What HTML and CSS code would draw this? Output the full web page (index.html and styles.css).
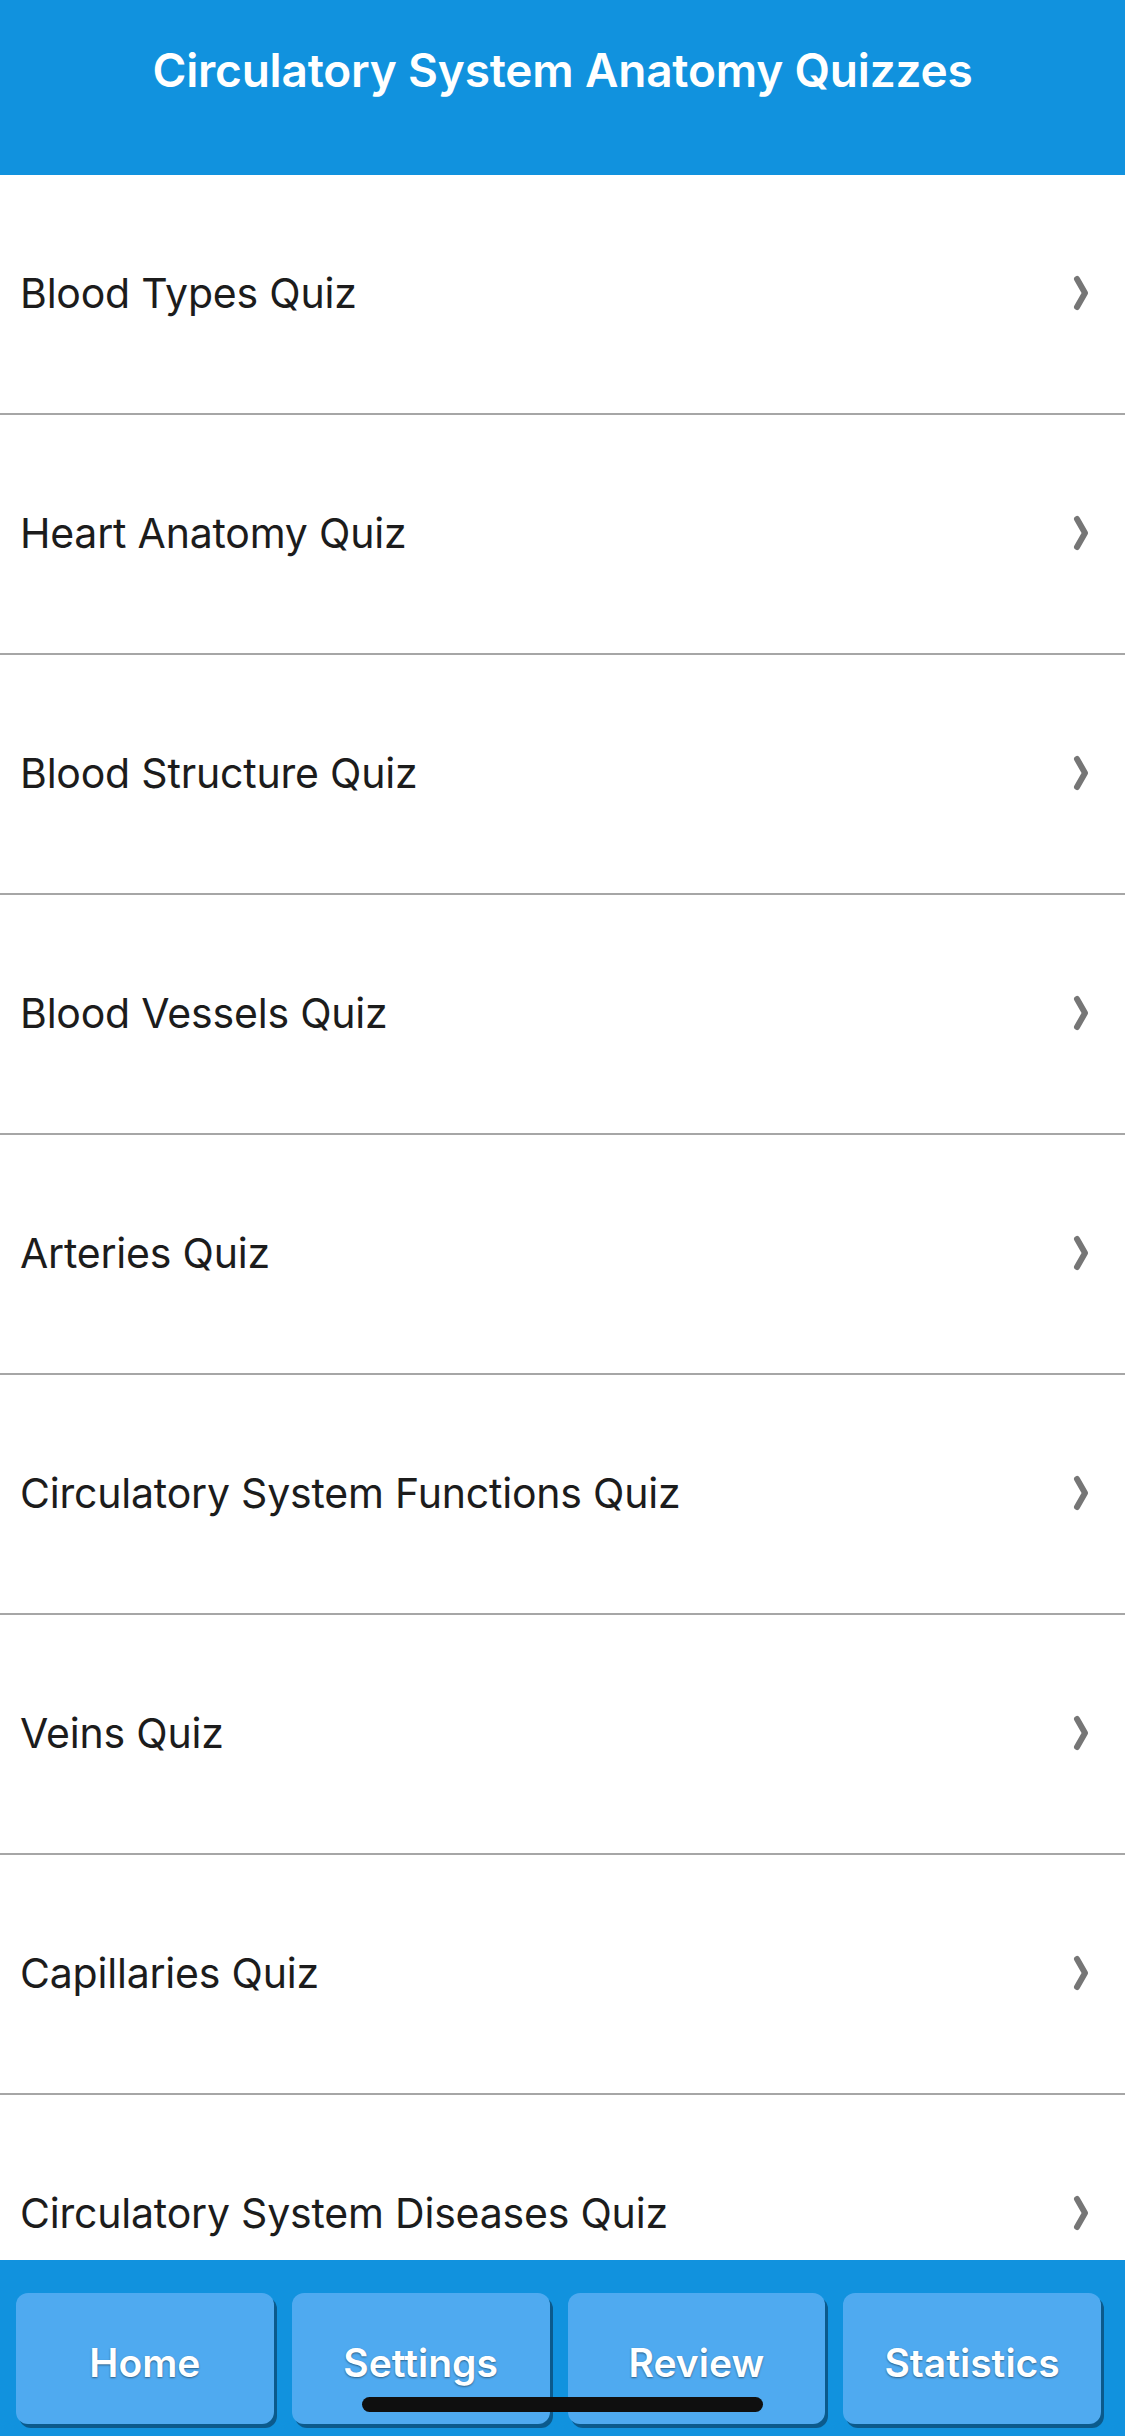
FILE: index.html
```html
<!DOCTYPE html>
<html lang="en">
<head>
<meta charset="utf-8">
<title>Circulatory System Anatomy Quizzes</title>
<link rel="stylesheet" href="styles.css">
</head>
<body>
<div class="screen">
  <header class="topbar">
    <h1 class="title">Circulatory System Anatomy Quizzes</h1>
  </header>
  <main class="list">
    <div class="row"><span class="label">Blood Types Quiz</span><svg class="chev" viewBox="0 0 16 36"><path d="M4 4 L12 18 L4 32"/></svg></div>
    <div class="row"><span class="label">Heart Anatomy Quiz</span><svg class="chev" viewBox="0 0 16 36"><path d="M4 4 L12 18 L4 32"/></svg></div>
    <div class="row"><span class="label">Blood Structure Quiz</span><svg class="chev" viewBox="0 0 16 36"><path d="M4 4 L12 18 L4 32"/></svg></div>
    <div class="row"><span class="label">Blood Vessels Quiz</span><svg class="chev" viewBox="0 0 16 36"><path d="M4 4 L12 18 L4 32"/></svg></div>
    <div class="row"><span class="label">Arteries Quiz</span><svg class="chev" viewBox="0 0 16 36"><path d="M4 4 L12 18 L4 32"/></svg></div>
    <div class="row"><span class="label">Circulatory System Functions Quiz</span><svg class="chev" viewBox="0 0 16 36"><path d="M4 4 L12 18 L4 32"/></svg></div>
    <div class="row"><span class="label">Veins Quiz</span><svg class="chev" viewBox="0 0 16 36"><path d="M4 4 L12 18 L4 32"/></svg></div>
    <div class="row"><span class="label">Capillaries Quiz</span><svg class="chev" viewBox="0 0 16 36"><path d="M4 4 L12 18 L4 32"/></svg></div>
    <div class="row"><span class="label">Circulatory System Diseases Quiz</span><svg class="chev" viewBox="0 0 16 36"><path d="M4 4 L12 18 L4 32"/></svg></div>
  </main>
  <footer class="tabbar">
    <button class="tab">Home</button>
    <button class="tab">Settings</button>
    <button class="tab">Review</button>
    <button class="tab">Statistics</button>
    <div class="home-indicator"></div>
  </footer>
</div>
</body>
</html>
```

FILE: styles.css
```css
html, body {
  margin: 0;
  padding: 0;
  background: #ffffff;
}

body {
  font-family: Inter, "Liberation Sans", sans-serif;
}

.screen {
  width: 1125px;
  height: 2436px;
  display: flex;
  flex-direction: column;
  overflow: hidden;
}

.topbar {
  flex: 0 0 175px;
  background: #1192de;
  display: flex;
  justify-content: center;
  padding-top: 44px;
  box-sizing: border-box;
}

.title {
  margin: 0;
  color: #ffffff;
  font-size: 46px;
  font-weight: 600;
  letter-spacing: -0.2px;
  line-height: 52px;
}

.list {
  flex: 1 1 auto;
  overflow: hidden;
}

.row {
  height: 238px;
  border-bottom: 2px solid #a6a6a6;
  display: flex;
  align-items: center;
  justify-content: space-between;
  padding: 0 36px 2px 20px;
  box-sizing: content-box;
}

.row {
  height: 236px;
}

.label {
  font-size: 41px;
  color: #1c1c1c;
  letter-spacing: -0.2px;
}

.chev {
  width: 16px;
  height: 36px;
}

.chev path {
  fill: none;
  stroke: #767676;
  stroke-width: 6;
  stroke-linecap: round;
  stroke-linejoin: round;
}

.tabbar {
  position: relative;
  flex: 0 0 176px;
  background: #1192de;
  display: flex;
  gap: 18px;
  padding: 33px 24px 0 16px;
  box-sizing: border-box;
}

.tab {
  flex: 1 1 0;
  height: 131px;
  border: none;
  border-radius: 12px;
  background: #4faaf0;
  box-shadow: 3px 4px 0 #0b5a8c;
  color: #ffffff;
  font-family: Inter, "Liberation Sans", sans-serif;
  font-size: 39px;
  font-weight: 600;
  text-shadow: 0 1px 2px rgba(0, 0, 0, 0.45);
  padding: 8px 0 0 0;
}

.home-indicator {
  position: absolute;
  left: 362px;
  top: 137px;
  width: 401px;
  height: 15px;
  border-radius: 8px;
  background: #0f0f0f;
}
```
